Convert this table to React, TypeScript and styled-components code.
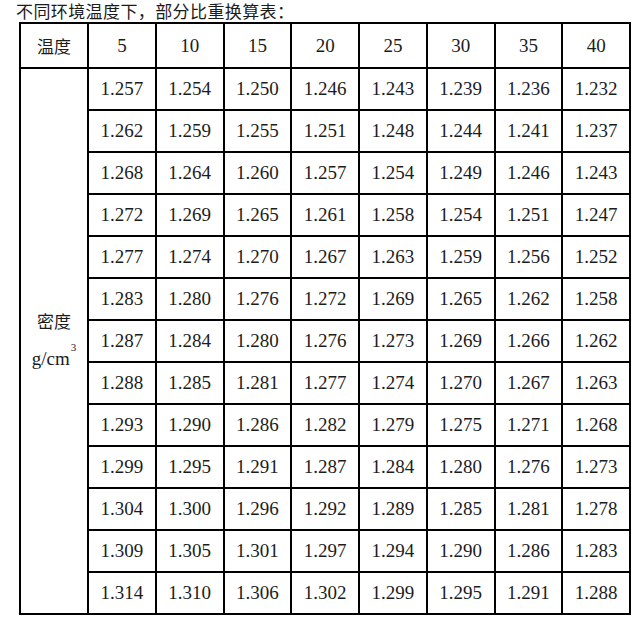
import React from "react";
import styled, { createGlobalStyle } from "styled-components";

const temps = [5, 10, 15, 20, 25, 30, 35, 40];

const rows: string[][] = [
  ["1.257", "1.254", "1.250", "1.246", "1.243", "1.239", "1.236", "1.232"],
  ["1.262", "1.259", "1.255", "1.251", "1.248", "1.244", "1.241", "1.237"],
  ["1.268", "1.264", "1.260", "1.257", "1.254", "1.249", "1.246", "1.243"],
  ["1.272", "1.269", "1.265", "1.261", "1.258", "1.254", "1.251", "1.247"],
  ["1.277", "1.274", "1.270", "1.267", "1.263", "1.259", "1.256", "1.252"],
  ["1.283", "1.280", "1.276", "1.272", "1.269", "1.265", "1.262", "1.258"],
  ["1.287", "1.284", "1.280", "1.276", "1.273", "1.269", "1.266", "1.262"],
  ["1.288", "1.285", "1.281", "1.277", "1.274", "1.270", "1.267", "1.263"],
  ["1.293", "1.290", "1.286", "1.282", "1.279", "1.275", "1.271", "1.268"],
  ["1.299", "1.295", "1.291", "1.287", "1.284", "1.280", "1.276", "1.273"],
  ["1.304", "1.300", "1.296", "1.292", "1.289", "1.285", "1.281", "1.278"],
  ["1.309", "1.305", "1.301", "1.297", "1.294", "1.290", "1.286", "1.283"],
  ["1.314", "1.310", "1.306", "1.302", "1.299", "1.295", "1.291", "1.288"],
];

const serifStack = `"Liberation Serif", "Times New Roman", serif`;
const cjkStack = `"Noto Sans CJK SC", sans-serif`;

const GlobalStyle = createGlobalStyle`
  html, body {
    margin: 0;
    padding: 0;
    background: #fff;
  }
  body {
    font-family: ${serifStack};
    color: #1c1c1c;
  }
`;

const Page = styled.div`
  width: 640px;
  height: 620px;
  overflow: hidden;
`;

const Title = styled.div`
  height: 22px;
  line-height: 22px;
  padding-left: 16px;
  font-family: ${cjkStack};
  font-size: 17px;
  letter-spacing: 0.4px;
  color: #1c1c1c;
`;

const Table = styled.table`
  margin-left: 19px;
  width: 610px;
  table-layout: fixed;
  border-collapse: collapse;
  border: 2px solid #000;
`;

const Col = styled.col<{ $w: number }>`
  width: ${(p) => p.$w}px;
`;

const HeadRow = styled.tr`
  height: 45px;
`;

const DataRow = styled.tr`
  height: 42px;
`;

const Cell = styled.td<{ $cjk?: boolean }>`
  border: 2px solid #000;
  padding: 0;
  text-align: center;
  vertical-align: middle;
  font-family: ${(p) => (p.$cjk ? cjkStack : serifStack)};
  font-size: ${(p) => (p.$cjk ? "17px" : "19px")};
  color: #1c1c1c;
`;

const LabelCell = styled.td`
  border: 2px solid #000;
  padding: 0 0 4px 0;
  text-align: center;
  vertical-align: middle;
  color: #1c1c1c;
`;

const LabelLine = styled.div<{ $cjk?: boolean }>`
  line-height: 27px;
  font-family: ${(p) => (p.$cjk ? cjkStack : serifStack)};
  font-size: ${(p) => (p.$cjk ? "17px" : "19px")};
`;

const Sup = styled.sup`
  font-size: 11px;
  vertical-align: 14px;
  margin-left: 1px;
`;

export default function App() {
  return (
    <Page>
      <GlobalStyle />
      <Title>不同环境温度下，部分比重换算表：</Title>
      <Table>
        <colgroup>
          <Col $w={68} />
          {temps.map((t) => (
            <Col key={t} $w={67.75} />
          ))}
        </colgroup>
        <tbody>
          <HeadRow>
            <Cell $cjk>温度</Cell>
            {temps.map((t) => (
              <Cell key={t}>{t}</Cell>
            ))}
          </HeadRow>
          {rows.map((r, i) => (
            <DataRow key={i}>
              {i === 0 && (
                <LabelCell rowSpan={rows.length}>
                  <LabelLine $cjk>密度</LabelLine>
                  <LabelLine>
                    g/cm<Sup>3</Sup>
                  </LabelLine>
                </LabelCell>
              )}
              {r.map((v, j) => (
                <Cell key={j}>{v}</Cell>
              ))}
            </DataRow>
          ))}
        </tbody>
      </Table>
    </Page>
  );
}
